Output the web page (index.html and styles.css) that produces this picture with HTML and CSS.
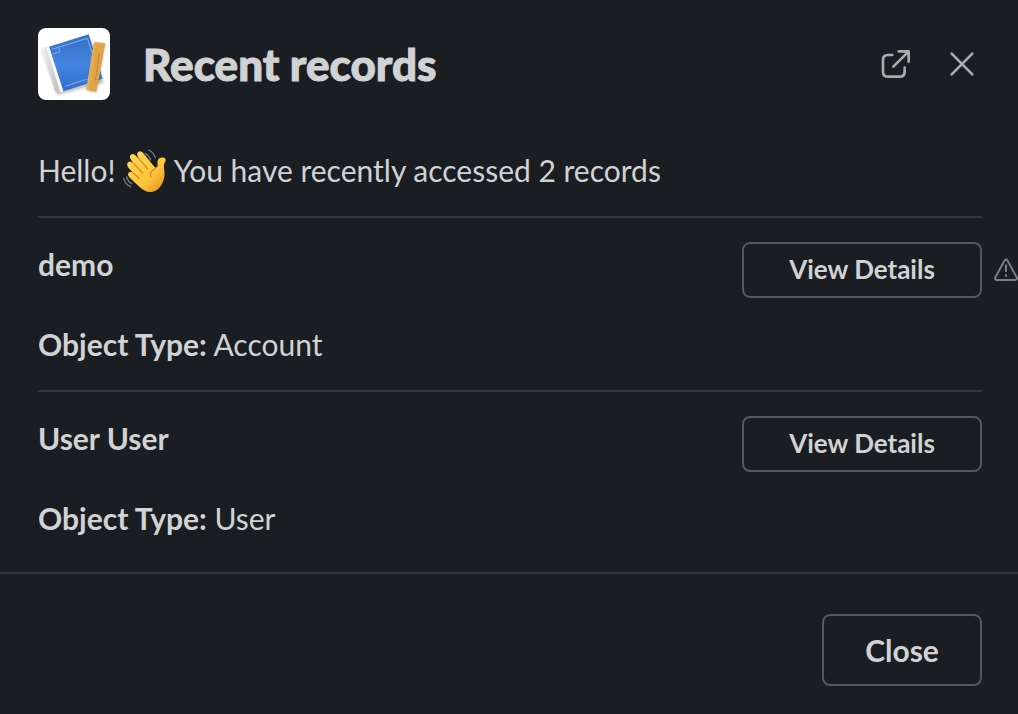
FILE: index.html
```html
<!DOCTYPE html>
<html lang="en">
<head>
<meta charset="utf-8">
<meta name="viewport" content="width=device-width, initial-scale=1">
<title>Recent records</title>
<link rel="stylesheet" href="styles.css">
</head>
<body>
<div class="modal" role="dialog" aria-labelledby="modal-title">
  <header class="modal-header">
    <svg class="app-icon" viewBox="24 24 216 216" aria-hidden="true">
      <defs>
        <linearGradient id="cover" x1="0" y1="0" x2="0" y2="1"><stop offset="0" stop-color="#3070c8"/><stop offset=".5" stop-color="#4584de"/><stop offset="1" stop-color="#2e6fd0"/></linearGradient>
        <linearGradient id="spine" x1="0" y1="0" x2="1" y2="0"><stop offset="0" stop-color="#f2f2f2"/><stop offset=".45" stop-color="#d4d4d4"/><stop offset="1" stop-color="#b4b4b6"/></linearGradient>
        <filter id="soft" x="-20%" y="-20%" width="140%" height="140%"><feGaussianBlur stdDeviation="4"/></filter>
      </defs>
      <rect x="24" y="24" width="216" height="216" fill="#fff"/>
      <path d="M36 88L82 224L220 188L180 60Z" fill="#777" opacity=".5" filter="url(#soft)"/>
      <path d="M35 86Q46 79 57 83L100 214L84 219Q77 219 74 211Z" fill="url(#spine)"/>
      <path d="M57 80L176 43L218 176L100 214Z" fill="url(#cover)"/>
      <path d="M57 80L100 214L91 217L50 84Z" fill="#fafafa"/>
      <path d="M65 88L172 55L208 166L104 199" fill="none" stroke="#86b0e8" stroke-width="3"/>
      <path d="M67 102L90 95L86 82" fill="none" stroke="#86b0e8" stroke-width="3"/>
      <path d="M197 68L225 72L200 217L172 212Z" fill="#555" opacity=".4" filter="url(#soft)"/>
      <path d="M192 66L226 70L199 215L169 210Z" fill="#e0a448"/>
      <path d="M192 66L199 67L176 211L169 210Z" fill="#eab45c"/>
      <path d="M208 99L196 184" stroke="#a9792e" stroke-width="3" stroke-dasharray="4 2"/>
      <path d="M196 72L173 207" stroke="#bd8532" stroke-width="4" stroke-dasharray="1 6"/>
    </svg>
    <h1 class="modal-title" id="modal-title">Recent records</h1>
    <div class="header-actions">
      <button class="icon-button" type="button" aria-label="Open in new window">
        <svg class="action-icon" viewBox="30 24 96 96" aria-hidden="true"><path d="M67 45H54Q39 45 39 60V95Q39 110 54 110H89Q104 110 104 95V83M70 80L116 34M86 34H116V65"/></svg>
      </button>
      <button class="icon-button" type="button" aria-label="Dismiss">
        <svg class="action-icon" viewBox="228 24 96 96" aria-hidden="true"><path d="M245 41L307 103M307 41L245 103"/></svg>
      </button>
    </div>
  </header>

  <main class="modal-body">
    <p class="intro">Hello!
      <svg class="wave" viewBox="27 24 132 132" role="img" aria-label="waving hand">
        <defs><linearGradient id="skin" x1="0" y1="0" x2="1" y2="1"><stop offset="0" stop-color="#ffd65a"/><stop offset=".6" stop-color="#ffc73a"/><stop offset="1" stop-color="#e08a1c"/></linearGradient></defs>
        <path fill="url(#skin)" d="M72 34C77 28 84 32 88 37L121 77C126 82 131 80 131 73C130 65 130 56 136 52C144 48 155 49 155 57C155 62 151 65 150 71C149 84 154 96 150 112C146 131 136 145 121 151C104 157 89 149 77 138L47 110C42 105 40 98 45 94C49 90 54 93 58 96L43 80C38 74 38 67 43 63C48 59 54 63 58 67L51 56C46 49 47 43 53 40C58 37 64 42 68 47L75 53C70 46 67 39 72 34Z"/>
        <path fill="none" stroke="#d98d20" stroke-width="4" stroke-linecap="round" d="M75 53L101 84M58 67L86 96M58 96L75 112M124 82C114 88 107 97 110 107"/>
        <path fill="none" stroke="#777a7e" stroke-width="4" stroke-linecap="round" d="M93 38Q105 43 110 57M104 27Q118 33 124 50M38 108Q42 122 53 128M29 112Q33 129 50 137"/>
      </svg>
      You have recently accessed 2 records</p>

    <section class="record">
      <div class="record-text">
        <h2 class="record-name">demo</h2>
        <p><strong>Object Type:</strong> Account</p>
      </div>
      <div class="record-action">
        <button class="button button-small" type="button">View Details</button>
        <svg class="warning" viewBox="42 24 72 72" role="img" aria-label="Warning"><path d="M74 31Q78 26 82 31L110 82Q113 89 106 90H50Q43 89 46 82Z"/><path d="M78 46V64M78 75V78"/></svg>
      </div>
    </section>

    <section class="record">
      <div class="record-text">
        <h2 class="record-name">User User</h2>
        <p><strong>Object Type:</strong> User</p>
      </div>
      <div class="record-action">
        <button class="button button-small" type="button">View Details</button>
      </div>
    </section>
  </main>

  <footer class="modal-footer">
    <button class="button button-large" type="button">Close</button>
  </footer>
</div>
</body>
</html>
```
FILE: styles.css
```css
* {
  box-sizing: border-box;
}

body {
  margin: 0;
  background: #1a1d21;
  color: #d1d2d3;
  font-family: Lato, "Liberation Sans", sans-serif;
  font-size: 30px;
  line-height: 44px;
}

h1, h2, p {
  margin: 0;
}

button {
  background: transparent;
  color: inherit;
  font-family: inherit;
  cursor: pointer;
}

.modal {
  overflow: hidden;
}

.modal-header {
  display: flex;
  align-items: center;
  padding: 28px 40px 28px 38px;
}

.app-icon {
  width: 72px;
  height: 72px;
  border-radius: 8px;
}

.modal-title {
  flex: 1;
  margin-left: 33px;
  font-family: "Lato Black", Lato, "Liberation Sans", sans-serif;
  font-size: 44px;
  font-weight: 900;
  line-height: 60px;
  -webkit-text-stroke: 1px currentColor;
}

.header-actions {
  display: flex;
  gap: 34px;
}

.icon-button {
  padding: 0;
  border: 0;
  line-height: 0;
}

.action-icon {
  width: 32px;
  height: 32px;
  fill: none;
  stroke: #ababad;
  stroke-width: 8;
  stroke-linecap: round;
  stroke-linejoin: round;
}

.modal-body {
  padding: 20px 36px 0 38px;
}

.intro {
  padding-bottom: 24px;
}

.wave {
  width: 44px;
  height: 44px;
  vertical-align: middle;
  margin: -8px 0 -2px;
}

.record {
  display: flex;
  justify-content: space-between;
  gap: 32px;
  padding: 24px 0;
  border-top: 2px solid #35373b;
}

.record-text {
  display: grid;
  gap: 36px;
}

.record-name {
  font-size: 30px;
  font-weight: 700;
}

.record-action {
  position: relative;
  flex-shrink: 0;
}

.button {
  display: block;
  border: 2px solid #55575a;
  border-radius: 8px;
  font-weight: 700;
}

.button-small {
  width: 240px;
  height: 56px;
  padding: 0 0 2px;
  font-size: 26px;
}

.button-large {
  width: 160px;
  height: 72px;
  font-size: 30px;
}

.warning {
  position: absolute;
  top: 16px;
  left: calc(100% + 12px);
  width: 24px;
  height: 24px;
  fill: none;
  stroke: #7d7f82;
  stroke-width: 6;
  stroke-linecap: round;
}

.modal-footer {
  display: flex;
  justify-content: flex-end;
  margin-top: 8px;
  padding: 40px 36px 28px;
  border-top: 2px solid #35373b;
}
```
